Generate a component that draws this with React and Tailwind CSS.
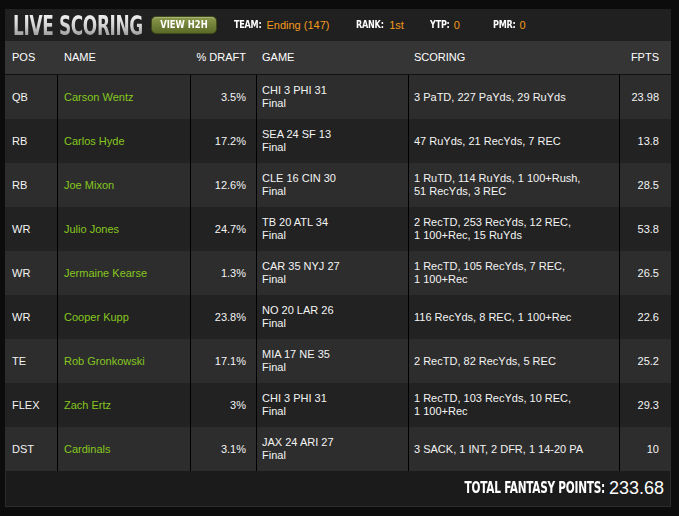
import React from "react";

const rows = [
  ["QB", "Carson Wentz", "3.5%", ["CHI 3 PHI 31", "Final"], ["3 PaTD, 227 PaYds, 29 RuYds"], "23.98"],
  ["RB", "Carlos Hyde", "17.2%", ["SEA 24 SF 13", "Final"], ["47 RuYds, 21 RecYds, 7 REC"], "13.8"],
  ["RB", "Joe Mixon", "12.6%", ["CLE 16 CIN 30", "Final"], ["1 RuTD, 114 RuYds, 1 100+Rush,", "51 RecYds, 3 REC"], "28.5"],
  ["WR", "Julio Jones", "24.7%", ["TB 20 ATL 34", "Final"], ["2 RecTD, 253 RecYds, 12 REC,", "1 100+Rec, 15 RuYds"], "53.8"],
  ["WR", "Jermaine Kearse", "1.3%", ["CAR 35 NYJ 27", "Final"], ["1 RecTD, 105 RecYds, 7 REC,", "1 100+Rec"], "26.5"],
  ["WR", "Cooper Kupp", "23.8%", ["NO 20 LAR 26", "Final"], ["116 RecYds, 8 REC, 1 100+Rec"], "22.6"],
  ["TE", "Rob Gronkowski", "17.1%", ["MIA 17 NE 35", "Final"], ["2 RecTD, 82 RecYds, 5 REC"], "25.2"],
  ["FLEX", "Zach Ertz", "3%", ["CHI 3 PHI 31", "Final"], ["1 RecTD, 103 RecYds, 10 REC,", "1 100+Rec"], "29.3"],
  ["DST", "Cardinals", "3.1%", ["JAX 24 ARI 27", "Final"], ["3 SACK, 1 INT, 2 DFR, 1 14-20 PA"], "10"],
];

const cond = { fontFamily: '"DejaVu Sans Condensed", "DejaVu Sans", sans-serif' };

function Label({ children }) {
  return (
    <span
      className="inline-block origin-left scale-x-[0.82] text-[11px] font-bold text-white tracking-[-0.3px]"
      style={cond}
    >
      {children}
    </span>
  );
}

export default function App() {
  return (
    <div
      className="w-[679px] h-[516px] bg-[#0c0c0c] pt-[9px] pl-[5px]"
      style={{ fontFamily: '"Liberation Sans", Arial, sans-serif' }}
    >
      <div className="w-[666px] bg-[#1c1c1c]">
        {/* title bar */}
        <div className="h-[32px] bg-[#202020] flex items-center pl-[8px]">
          <div className="w-[132px] shrink-0 flex items-center overflow-visible pt-[2px]">
            <span
              className="inline-block shrink-0 whitespace-nowrap text-[26px] leading-none font-bold bg-gradient-to-b from-[#f6f6f6] via-[#d2d2d2] to-[#8a8a8a] bg-clip-text text-transparent origin-left scale-x-[0.725] tracking-[-0.5px]"
              style={cond}
            >
              LIVE SCORING
            </span>
          </div>
          <div className="ml-[6px] shrink-0 w-[66px] h-[18px] rounded-[5px] bg-gradient-to-b from-[#8c9a4c] to-[#5b6a26] border border-[#3f4a1a] flex items-center justify-center shadow-[inset_0_1px_0_rgba(255,255,255,0.25)]">
            <span
              className="inline-block text-[11px] font-bold text-white scale-x-[0.85] whitespace-nowrap"
              style={cond}
            >
              VIEW H2H
            </span>
          </div>
          <div className="ml-[17px] flex items-center">
            <Label>TEAM:</Label>
            <span className="text-[11px] text-[#f39a1d] -ml-[1px]">Ending (147)</span>
          </div>
          <div className="ml-[27px] flex items-center">
            <Label>RANK:</Label>
            <span className="text-[11px] text-[#f39a1d] -ml-[1px]">1st</span>
          </div>
          <div className="ml-[26px] flex items-center">
            <Label>YTP:</Label>
            <span className="text-[11px] text-[#f39a1d]">0</span>
          </div>
          <div className="ml-[33px] flex items-center">
            <Label>PMR:</Label>
            <span className="text-[11px] text-[#f39a1d] -ml-[1px]">0</span>
          </div>
        </div>

        {/* table header */}
        <div className="h-[34px] bg-[#353535] border-b border-[#111] grid grid-cols-[52px_133px_66px_152px_211px_52px] items-center text-[11px] text-white">
          <div className="pl-[7px]">POS</div>
          <div className="pl-[7px]">NAME</div>
          <div className="text-right pr-[10px]">% DRAFT</div>
          <div className="pl-[6px]">GAME</div>
          <div className="pl-[6px]">SCORING</div>
          <div className="text-right pr-[12px]">FPTS</div>
        </div>

        {/* rows */}
        {rows.map((r, i) => (
          <div
            key={i}
            className={
              "h-[44px] grid grid-cols-[52px_133px_66px_152px_211px_52px] text-[11px] leading-[13px] text-[#f4f4f4] " +
              (i % 2 === 0 ? "bg-[#2d2d2d]" : "bg-[#222222]")
            }
          >
            <div className="pl-[7px] flex items-center">{r[0]}</div>
            <div className="pl-[6px] flex items-center border-l border-black text-[#86c71f]">{r[1]}</div>
            <div className="pr-[10px] flex items-center justify-end border-l border-black">{r[2]}</div>
            <div className="pl-[5px] flex flex-col justify-center border-l border-black">
              {r[3].map((t, j) => (
                <div key={j}>{t}</div>
              ))}
            </div>
            <div className="pl-[5px] flex flex-col justify-center border-l border-black">
              {r[4].map((t, j) => (
                <div key={j}>{t}</div>
              ))}
            </div>
            <div className="pr-[12px] flex items-center justify-end border-l border-black">{r[5]}</div>
          </div>
        ))}

        {/* total */}
        <div className="h-[36px] bg-[#1b1b1b] border-l border-r border-b border-[#2c2c2c] flex items-center justify-end pr-[6px]">
          <span
            className="inline-block text-[15px] font-bold text-white whitespace-nowrap origin-right scale-x-[0.78] tracking-[-0.3px]"
            style={cond}
          >
            TOTAL FANTASY POINTS:
          </span>
          <span className="ml-[4px] text-[18px] text-white">233.68</span>
        </div>
      </div>
    </div>
  );
}
